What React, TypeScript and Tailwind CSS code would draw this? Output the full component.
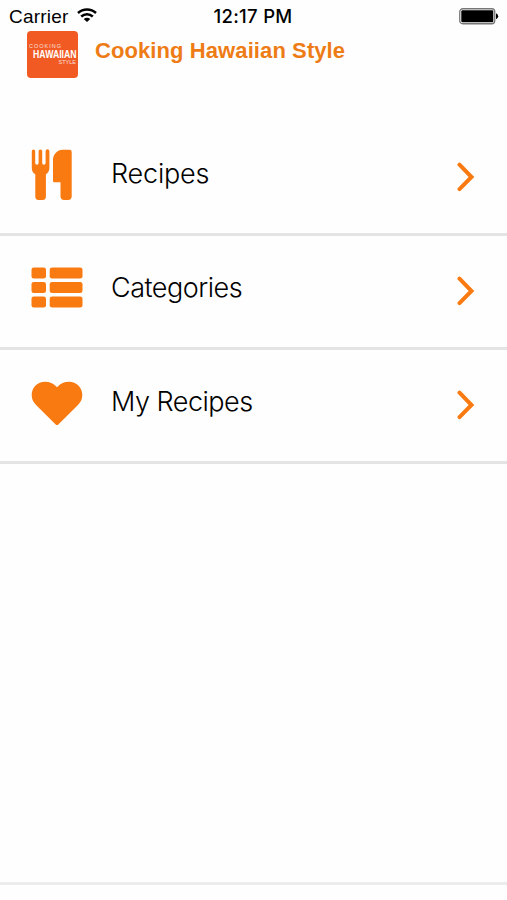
import type { ReactNode } from "react";

// ─────────────────────────────────────────────────────────────────
// Icons
// ─────────────────────────────────────────────────────────────────

function WifiIcon() {
  return (
    <svg width="20" height="15" viewBox="0 0 20 15" fill="none" stroke="#000" strokeWidth="2.5" aria-hidden="true">
      <path d="M1 5C6 .4 14 .4 19 5" />
      <path d="M4.2 8.5C7.6 5.4 12.4 5.4 15.800 8.5" />
      <path d="M6.700 11Q10 8.300 13.300 11L10 14Z" fill="#000" stroke="none" />
    </svg>
  );
}

function BatteryIcon() {
  return (
    <svg width="40" height="17" viewBox="0 0 40 17" aria-hidden="true">
      <rect x=".75" y=".75" width="35" height="15" rx="3" fill="#fff" stroke="#777" strokeWidth="1.3" />
      <rect x="2.3" y="2.3" width="32" height="12" rx="1.2" fill="#000" />
      <path d="M37 5.3q2.2.8 2.2 3t-2.2 3Z" fill="#000" />
    </svg>
  );
}

function UtensilsIcon() {
  return (
    <svg width="41" height="52" viewBox="0 0 41 52" fill="#f97a10" aria-hidden="true">
      <path d="M.8 2.2a1.7 1.7 0 0 1 3.4 0V14a1.7 1.7 0 0 0 3.4 0V2.2a1.8 1.8 0 0 1 3.6 0V14a1.7 1.7 0 0 0 3.4 0V2.2a1.9 1.9 0 0 1 3.8 0V19c0 3-1.4 5-3.5 6.3V47.5a3.5 3.5 0 0 1-3.5 3.5H7.8a3.5 3.5 0 0 1-3.5-3.5V25.3C2 24 .8 22 .8 19Z" />
      <path d="M31.5.7H38.5A2.2 2.2 0 0 1 40.7 2.9V47.3A3.7 3.7 0 0 1 37 51H33.2A3.7 3.7 0 0 1 29.5 47.3V33.3H23.3A1.3 1.3 0 0 1 22 32V10.2C22 5.7 26.5.7 31.5.7Z" />
    </svg>
  );
}

const LIST_ROWS = [0, 14.5, 29];

function ListIcon() {
  return (
    <svg width="52" height="41" viewBox="0 0 52 41" fill="#f97a10" aria-hidden="true">
      {LIST_ROWS.map((y) => (
        <g key={y}>
          <rect x=".5" y={y + 0.4} width="14.5" height="11.2" rx="2.4" />
          <rect x="18.7" y={y + 0.4} width="32.8" height="11.2" rx="2.4" />
        </g>
      ))}
    </svg>
  );
}

function HeartIcon() {
  return (
    <svg width="52" height="45" viewBox="0 0 52 45" fill="#f97a10" aria-hidden="true">
      <path d="M26 6.2C22.7 2.5 18.5.7 14 .7C6.5.7.7 6.5.7 14C.7 18.6 2.3 21.2 5.5 24.500L24.7 43.5Q26 44.7 27.3 43.5L46.5 24.5C49.7 21.2 51.3 18.6 51.3 14C51.3 6.5 45.5.7 38 .7C33.5.7 29.3 2.5 26 6.2Z" />
    </svg>
  );
}

function ChevronIcon() {
  return (
    <svg
      width="18"
      height="30"
      viewBox="0 0 18 30"
      fill="none"
      stroke="#f97a10"
      strokeWidth="4"
      strokeLinecap="round"
      aria-hidden="true"
    >
      <path d="M2.5 2.7L14.5 15L2.5 27.1" strokeLinejoin="miter" />
    </svg>
  );
}

// ─────────────────────────────────────────────────────────────────
// Menu
// ─────────────────────────────────────────────────────────────────

interface MenuItem {
  label: string;
  icon: ReactNode;
  iconClass: string;
  labelClass: string;
}

const MENU_ITEMS: MenuItem[] = [
  { label: "Recipes", icon: <UtensilsIcon />, iconClass: "mt-[27px]", labelClass: "tracking-[-0.2px]" },
  { label: "Categories", icon: <ListIcon />, iconClass: "mt-[31px]", labelClass: "tracking-[-0.5px]" },
  { label: "My Recipes", icon: <HeartIcon />, iconClass: "mt-[31px]", labelClass: "tracking-[-0.5px]" },
];

function MenuRow({ label, icon, iconClass, labelClass }: MenuItem) {
  return (
    <a href="#" className="flex h-[114px] items-start border-b-3 border-[#e4e4e4] pr-8 pl-[31px]">
      <span className={`w-20 shrink-0 ${iconClass}`}>{icon}</span>
      <span
        className={`mt-[34px] flex-1 font-['Inter','Liberation_Sans',sans-serif] text-[27px] leading-9 font-light whitespace-nowrap ${labelClass}`}
      >
        {label}
      </span>
      <span className="mt-10 shrink-0">
        <ChevronIcon />
      </span>
    </a>
  );
}

// ─────────────────────────────────────────────────────────────────
// Screen
// ─────────────────────────────────────────────────────────────────

export default function App() {
  return (
    <div className="flex h-[900px] w-[507px] flex-col overflow-hidden bg-[#fefefe] font-['Liberation_Sans',Arial,sans-serif] text-black">
      <div className="grid h-[31px] shrink-0 grid-cols-3 items-start pr-[8px] pl-[9px]">
        <div className="flex gap-[9px]">
          <span className="mt-[5px] text-[19px] leading-6 tracking-[0.2px]">Carrier</span>
          <span className="mt-2">
            <WifiIcon />
          </span>
        </div>
        <span className="mt-1 -ml-0.5 text-center font-['Inter','Liberation_Sans',sans-serif] text-[18.5px] leading-6 font-medium tracking-[0.3px] whitespace-nowrap">
          12:17 PM
        </span>
        <span className="mt-2 justify-self-end">
          <BatteryIcon />
        </span>
      </div>

      <header className="flex h-[91px] shrink-0 items-start pl-[27px]">
        <div className="flex h-[47px] w-[51px] flex-col rounded-[4px] bg-[#f15a22] pt-[13px] leading-none text-white">
          <span className="pl-[2px] text-[5.5px] leading-[5px] tracking-[1px] opacity-80">COOKING</span>
          <span className="origin-left scale-x-[0.87] pl-[7px] text-[10px] leading-[11px] font-bold whitespace-nowrap">
            HAWAIIAN
          </span>
          <span className="pr-[2px] text-right text-[5.5px] leading-[5px] opacity-80">STYLE</span>
        </div>
        <h1 className="mt-[6px] ml-[17px] text-[22px] leading-7 font-bold tracking-[0.09px] whitespace-nowrap text-[#ee7c16]">
          Cooking Hawaiian Style
        </h1>
      </header>

      <nav className="flex-1" aria-label="Main menu">
        {MENU_ITEMS.map((item) => (
          <MenuRow key={item.label} {...item} />
        ))}
      </nav>

      <footer className="h-[18px] shrink-0 border-t-3 border-[#ececec]" />
    </div>
  );
}
